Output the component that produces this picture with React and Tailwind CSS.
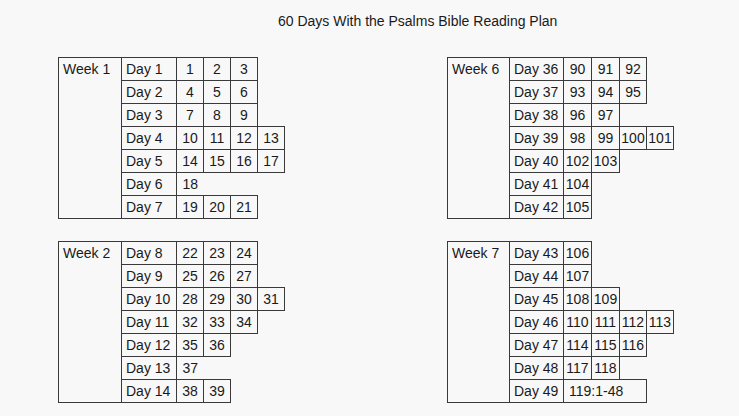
const weeks = [
  {
    name: "Week 1",
    cols: ["w-[63px]", "w-[55px]", "w-[27px]", "w-[27px]", "w-[27px]", "w-[27px]"],
    days: [
      ["Day 1", ["1", "2", "3"]],
      ["Day 2", ["4", "5", "6"]],
      ["Day 3", ["7", "8", "9"]],
      ["Day 4", ["10", "11", "12", "13"]],
      ["Day 5", ["14", "15", "16", "17"]],
      ["Day 6", ["18"], true],
      ["Day 7", ["19", "20", "21"]],
    ],
  },
  {
    name: "Week 6",
    cols: ["w-[62px]", "w-[54px]", "w-[28px]", "w-[28px]", "w-[27px]", "w-[27px]"],
    days: [
      ["Day 36", ["90", "91", "92"]],
      ["Day 37", ["93", "94", "95"]],
      ["Day 38", ["96", "97"]],
      ["Day 39", ["98", "99", "100", "101"]],
      ["Day 40", ["102", "103"]],
      ["Day 41", ["104"]],
      ["Day 42", ["105"]],
    ],
  },
  {
    name: "Week 2",
    cols: ["w-[63px]", "w-[55px]", "w-[27px]", "w-[27px]", "w-[27px]", "w-[27px]"],
    days: [
      ["Day 8", ["22", "23", "24"]],
      ["Day 9", ["25", "26", "27"]],
      ["Day 10", ["28", "29", "30", "31"]],
      ["Day 11", ["32", "33", "34"]],
      ["Day 12", ["35", "36"]],
      ["Day 13", ["37"], true],
      ["Day 14", ["38", "39"]],
    ],
  },
  {
    name: "Week 7",
    cols: ["w-[62px]", "w-[54px]", "w-[28px]", "w-[28px]", "w-[27px]", "w-[27px]"],
    days: [
      ["Day 43", ["106"]],
      ["Day 44", ["107"]],
      ["Day 45", ["108", "109"]],
      ["Day 46", ["110", "111", "112", "113"]],
      ["Day 47", ["114", "115", "116"]],
      ["Day 48", ["117", "118"]],
      ["Day 49", ["119:1-48"]],
    ],
  },
];

function WeekTable({ week }) {
  return (
    <table className="table-fixed border-collapse self-start justify-self-start w-[226px]">
      <colgroup>
        {week.cols.map((c, i) => (
          <col key={i} className={c} />
        ))}
      </colgroup>
      <tbody>
        {week.days.map(([day, psalms, open], r) => (
          <tr key={day} className="h-[23px]">
            {r === 0 && (
              <td rowSpan={7} className="align-top border border-[#3a3a3a] pl-[4px] leading-[23px]">
                {week.name}
              </td>
            )}
            <td className="border border-[#3a3a3a] pl-[4px] leading-[22px] whitespace-nowrap">{day}</td>
            {psalms.map((p, i) =>
              p.includes(":") ? (
                <td key={i} colSpan={3} className="border border-[#3a3a3a] pl-[5px] leading-[22px] whitespace-nowrap">
                  {p}
                </td>
              ) : (
                <td
                  key={i}
                  className={`border-y border-l border-[#3a3a3a] text-center leading-[22px] p-0 whitespace-nowrap ${
                    open ? "border-r-0" : "border-r"
                  }`}
                >
                  {p}
                </td>
              )
            )}
          </tr>
        ))}
      </tbody>
    </table>
  );
}

export default function App() {
  return (
    <div className="w-[739px] h-[416px] bg-[#f8f8f8] text-[#1a1a1a] text-[14px] font-['Liberation_Sans',Arial,sans-serif] overflow-hidden">
      <div className="pt-[11px] pl-[278px] leading-[20px]">60 Days With the Psalms Bible Reading Plan</div>
      <div className="mt-[26px] pl-[58px] grid grid-cols-[389px_auto] gap-y-[22px]">
        {weeks.map((w) => (
          <WeekTable key={w.name} week={w} />
        ))}
      </div>
    </div>
  );
}
